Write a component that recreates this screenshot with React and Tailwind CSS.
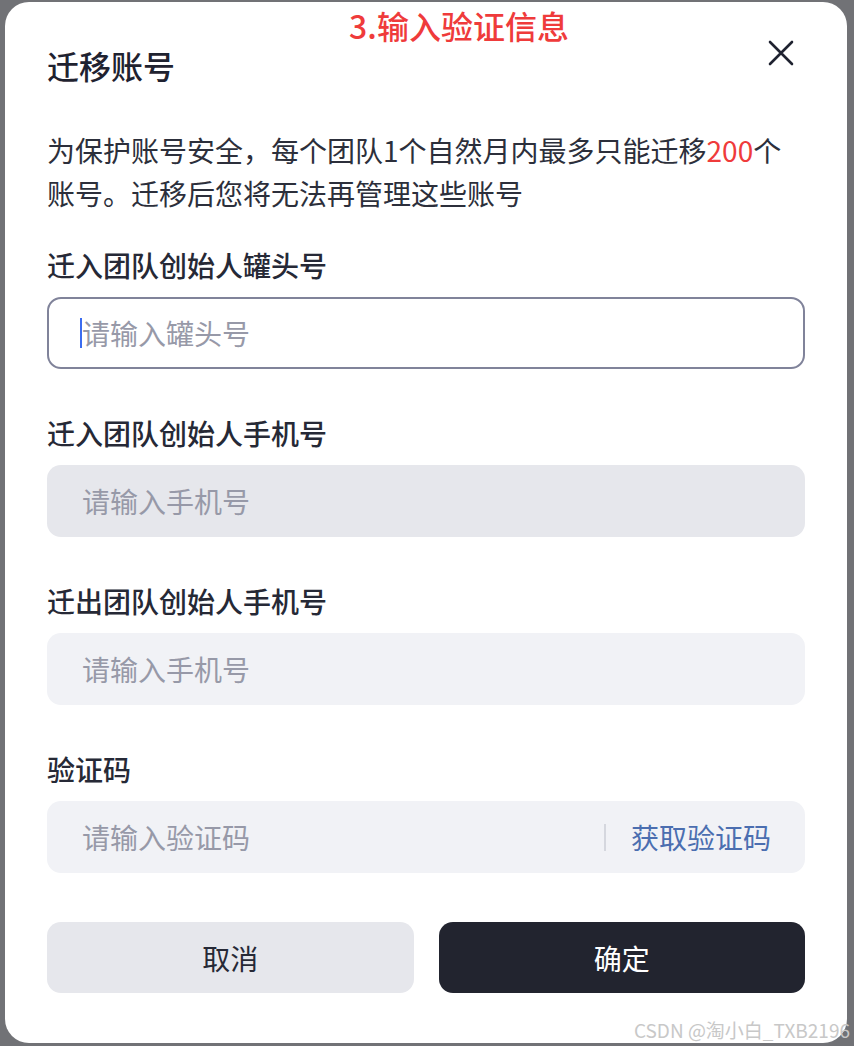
import React from 'react';

const Label = ({ children, className = '' }) => (
  <div className={`text-[28px] leading-[40px] font-medium text-[#262936] ${className}`}>{children}</div>
);

const Field = ({ placeholder, tone = 'light', caret = false, suffix = null }) => {
  const base =
    tone === 'outline'
      ? 'border-2 border-[#80839a] bg-white pl-[33px]'
      : tone === 'dim'
        ? 'bg-[#e6e7ec] pl-[35px]'
        : 'bg-[#f1f2f6] pl-[35px]';
  return (
    <div className={`mt-[12px] h-[72px] rounded-[14px] flex items-center pr-[34px] ${base}`}>
      {caret && <span className="w-[2px] h-[30px] bg-[#3b6cf0] -ml-[2px]" />}
      <span className="flex-1 text-[28px] text-[#9799a8]">{placeholder}</span>
      {suffix}
    </div>
  );
};

export default function App() {
  return (
    <div className="relative w-[854px] h-[1046px] bg-[#717276] pt-[2px] pl-[5px] font-['Noto_Sans_CJK_SC',sans-serif] overflow-hidden">
      <div className="relative w-[842px] h-[1041px] bg-white rounded-[24px] px-[42px] pt-[43px]">
        {/* screenshot annotation */}
        <div className="absolute top-[4px] left-0 right-0 text-center pl-[66px] text-[32px] leading-[38px] font-medium text-[#ef3b3b]">
          3.输入验证信息
        </div>

        <div className="flex justify-between items-start h-[40px]">
          <h1 className="text-[32px] leading-[40px] font-medium text-[#1f2230]">迁移账号</h1>
          <svg width="28" height="28" viewBox="0 0 28 28" className="-mt-[6px] mr-[10px]" fill="none" stroke="#1f2230" strokeWidth="2.6" strokeLinecap="round">
            <path d="M3 3L25 25M25 3L3 25" />
          </svg>
        </div>

        <p className="mt-[44px] text-[28px] leading-[43px] text-[#2c2f3b]">
          为保护账号安全，每个团队1个自然月内最多只能迁移<span className="text-[#ef3b3b]">200</span>个账号。迁移后您将无法再管理这些账号
        </p>

        <Label className="mt-[30px]">迁入团队创始人罐头号</Label>
        <Field placeholder="请输入罐头号" tone="outline" caret />

        <Label className="mt-[44px]">迁入团队创始人手机号</Label>
        <Field placeholder="请输入手机号" tone="dim" />

        <Label className="mt-[44px]">迁出团队创始人手机号</Label>
        <Field placeholder="请输入手机号" />

        <Label className="mt-[44px]">验证码</Label>
        <Field
          placeholder="请输入验证码"
          suffix={
            <div className="flex items-center">
              <span className="w-[2px] h-[27px] bg-[#d5d7de] mr-[25px]" />
              <span className="text-[28px] text-[#4b6eb0]">获取验证码</span>
            </div>
          }
        />

        <div className="mt-[49px] grid grid-cols-2 gap-[25px]">
          <button className="h-[71px] rounded-[14px] bg-[#e6e7ec] text-[28px] text-[#262936]">取消</button>
          <button className="h-[71px] rounded-[14px] bg-[#22242f] text-[28px] text-white">确定</button>
        </div>
      </div>

      <div className="absolute right-[4px] bottom-[5px] text-[19px] leading-[22px] text-[#c8c8c8]">
        CSDN @淘小白_TXB2196
      </div>
    </div>
  );
}
